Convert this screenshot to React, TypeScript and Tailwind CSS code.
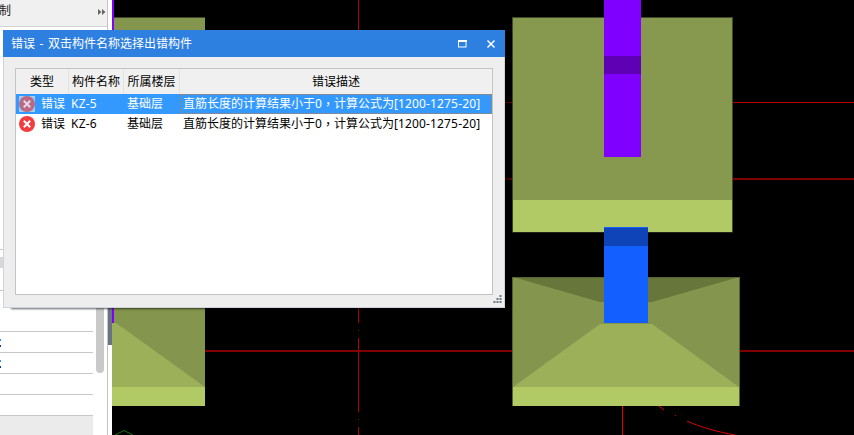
const UI = '"Noto Sans", "Noto Sans CJK SC", "Liberation Sans", sans-serif';

function ErrIcon({ selected }: { selected?: boolean }) {
  return (
    <svg width="16" height="16" viewBox="0 0 16 16" className="block shrink-0">
      <circle cx="8" cy="8" r="8" fill={selected ? '#bb6a85' : '#f23c3f'} />
      <path d="M4.8 4.8 L11.2 11.2 M11.2 4.8 L4.8 11.2" stroke={selected ? '#e4dbe6' : '#ffffff'} strokeWidth="2" />
    </svg>
  );
}

function Row({ name, selected }: { name: string; selected?: boolean }) {
  return (
    <div className={`flex h-5 items-center text-[12px] ${selected ? 'bg-[#3399ff] text-white' : 'bg-white text-black'}`}>
      <div className="flex w-[53px] items-center">
        <div className={`ml-[3px] h-4 w-4 shrink-0 ${selected ? 'bg-[#a8cdf0]' : ''}`}>
          <ErrIcon selected={selected} />
        </div>
        <span className="ml-[6px] whitespace-nowrap">错误</span>
      </div>
      <span className="w-[58px] pl-[2px] tracking-[0.2px] whitespace-nowrap">{name}</span>
      <span className="w-[54px] whitespace-nowrap">基础层</span>
      <span className={`flex h-5 flex-1 items-center pl-[1px] whitespace-nowrap border border-dotted ${selected ? 'border-[#c97a2a]' : 'border-transparent'}`}>
        <span>直筋长度的计算结果小于0</span>
        <span className="font-['Noto_Sans_CJK_TC']">，</span>
        <span>计算公式为</span>
        <span className="tracking-[0.15px]">[1200-1275-20]</span>
      </span>
    </div>
  );
}

function Scene() {
  return (
    <svg width="742" height="435" viewBox="112 0 742 435" className="block">
      <rect x="112" y="0" width="742" height="435" fill="#000" />
      {/* grid lines */}
      <path d="M358.5 0V40" stroke="#b00000" strokeWidth="1" />
      <path d="M358.5 300V323M358.5 330v1M358.5 338V412M358.5 419v1M358.5 427V435" stroke="#b00000" strokeWidth="1" />
      <path d="M500 102.5H854" stroke="#c00000" strokeWidth="1" />
      <path d="M500 179H854" stroke="#800000" strokeWidth="2" />
      <path d="M112 351H854" stroke="#800000" strokeWidth="2" />
      <path d="M622.5 400V435" stroke="#ee0000" strokeWidth="1" />
      <path d="M659 406L664 410M675 415.5h1M687 421C700 427 718 432 735 435" stroke="#e00000" strokeWidth="1" fill="none" />
      <path d="M115 435L124 430.5L133 435" stroke="#0a7a0a" strokeWidth="1" fill="none" />

      {/* left footing */}
      <rect x="112" y="17" width="93" height="389" fill="#84964d" />
      <path d="M114 17.5H205" stroke="#3e4a2a" strokeWidth="1" />
      <polygon points="112,323 116,323 205,387 112,387" fill="#9cb05a" />
      <rect x="112" y="387" width="93" height="19" fill="#b2ca66" />
      <rect x="112" y="0" width="2" height="30" fill="#7f00ff" />
      <rect x="112" y="308" width="2" height="15" fill="#7f00ff" />

      {/* top right footing */}
      <rect x="512.5" y="17.5" width="220" height="214.5" fill="#87984f" stroke="#3e4a2a" strokeWidth="1" />
      <rect x="513" y="200" width="219" height="32" fill="#b2ca66" />
      <rect x="604" y="0" width="37" height="157" fill="#7f00ff" />
      <rect x="604" y="56" width="37" height="18" fill="#5f00b5" />

      {/* bottom right footing */}
      <rect x="512" y="277" width="228" height="129" fill="#84964d" />
      <polygon points="513,277 739,277 652,302 600,302" fill="#67763a" />
      <polygon points="513,387 600,324 652,324 739,387" fill="#9cb05a" />
      <rect x="513" y="387" width="226" height="19" fill="#b2ca66" />
      <path d="M512.5 406V277.5H739.5V406" fill="none" stroke="#56652f" strokeWidth="1" />

      {/* blue column */}
      <rect x="604" y="227" width="44" height="96" fill="#135fff" />
      <rect x="604" y="228" width="44" height="18" fill="#0e44b8" />
    </svg>
  );
}

function SideRow({ mark }: { mark?: boolean }) {
  return (
    <div className="relative h-[21px] w-[93px] border-b border-[#c8c8c8] bg-white">
      {mark && (
        <div className="flex flex-col gap-[4px] pt-[7px]">
          <div className="h-[2px] w-[1px] bg-[#2f8ff0]" />
          <div className="h-[2px] w-[1px] bg-[#0a3aa0]" />
        </div>
      )}
    </div>
  );
}

function SidePanel() {
  return (
    <div className="flex h-full w-[112px] shrink-0 bg-white">
      <div className="flex h-full w-[107px] shrink-0 flex-col bg-white">
        <div className="flex h-[27px] shrink-0 items-start justify-between border-b border-[#d4d4d4] bg-[#f0f0f0] pr-[1px] pt-[2px] text-[12px] text-[#222]">
          <span className="-ml-[1px]">制</span>
          <svg width="8" height="8" viewBox="0 0 8 8" className="mt-[6px]">
            <path d="M0 1 L3.5 4 L0 7Z M4 1 L7.5 4 L4 7Z" fill="#666" />
          </svg>
        </div>
        <div className="h-[223px] w-[93px] shrink-0 border-b border-[#c8c8c8]" />
        <div className="h-[7px] shrink-0" />
        <div className="h-[11px] w-[93px] shrink-0 bg-[#d8d8d8]" />
        <div className="h-[23px] w-[93px] shrink-0 border-b border-[#c8c8c8]" />
        <div className="h-[41px] w-[93px] shrink-0 border-b border-[#c8c8c8]" />
        <SideRow mark />
        <SideRow mark />
        <SideRow />
        <SideRow />
        <div className="w-[93px] flex-1 bg-[#ebebeb]" />
      </div>
      <div className="h-full w-[1px] shrink-0 bg-[#c4c4c4]" />
      <div className="flex h-full w-[4px] shrink-0 flex-col bg-white">
        <div className="h-[30px]" />
        <div className="h-[315px] bg-[#6a7480]" />
      </div>
    </div>
  );
}

function Dialog() {
  return (
    <div className="absolute left-[3px] top-[30px] flex h-[278px] w-[502px] flex-col border-x border-b border-[#cfd4dc] bg-[#eeeeee] shadow-[7px_2px_2px_-1px_rgba(0,0,0,0.6)]">
      <div className="-mx-[1px] flex h-[27px] shrink-0 items-center justify-between bg-[#2e80e0] pl-[8px] pr-[8px] text-[12px] text-white">
        <span className="[word-spacing:1.5px]">错误 - 双击构件名称选择出错构件</span>
        <div className="flex items-center gap-[19px]">
          <svg width="9" height="8" viewBox="0 0 9 8">
            <rect x="0.5" y="1" width="7.5" height="6" fill="none" stroke="#fff" strokeWidth="1" />
            <path d="M0 1H9" stroke="#fff" strokeWidth="2" />
          </svg>
          <svg width="10" height="10" viewBox="0 0 10 10" className="mr-[1px]">
            <path d="M1.5 1.5L8.5 8.5M8.5 1.5L1.5 8.5" stroke="#fff" strokeWidth="1.5" />
          </svg>
        </div>
      </div>
      <div className="relative flex-1 pb-[12px] pl-[11px] pt-[11px]">
        <div className="flex h-full w-[478px] flex-col border border-[#c4c4c4] bg-white">
          <div className="flex h-[25px] shrink-0 gap-[1px] bg-[#e2e2e2] text-[12px] text-black">
            <div className="flex w-[52px] items-center justify-center bg-[#f0f0f0]">类型</div>
            <div className="flex w-[54px] items-center justify-center bg-[#f0f0f0]">构件名称</div>
            <div className="flex w-[55px] items-center justify-center bg-[#f0f0f0]">所属楼层</div>
            <div className="flex flex-1 items-center justify-center bg-[#f0f0f0]">错误描述</div>
          </div>
          <Row name="KZ-5" selected />
          <Row name="KZ-6" />
        </div>
        <svg width="9" height="9" viewBox="0 0 9 9" className="absolute bottom-[3px] right-[2px]">
          <path d="M6.5 0h2v2h-2zM3.5 3h2v2h-2zM6.5 3h2v2h-2zM0.5 6h2v2h-2zM3.5 6h2v2h-2zM6.5 6h2v2h-2z" fill="#6e7680" />
        </svg>
      </div>
    </div>
  );
}

export default function App() {
  return (
    <div className="relative flex h-[435px] w-[854px] overflow-hidden bg-black" style={{ fontFamily: UI }}>
      <SidePanel />
      <div className="flex-1">
        <Scene />
      </div>
      <div className="absolute left-[96px] top-[300px] h-[73px] w-[8px] rounded-b-[4px] bg-[#c9c9c9]" />
      <Dialog />
    </div>
  );
}
